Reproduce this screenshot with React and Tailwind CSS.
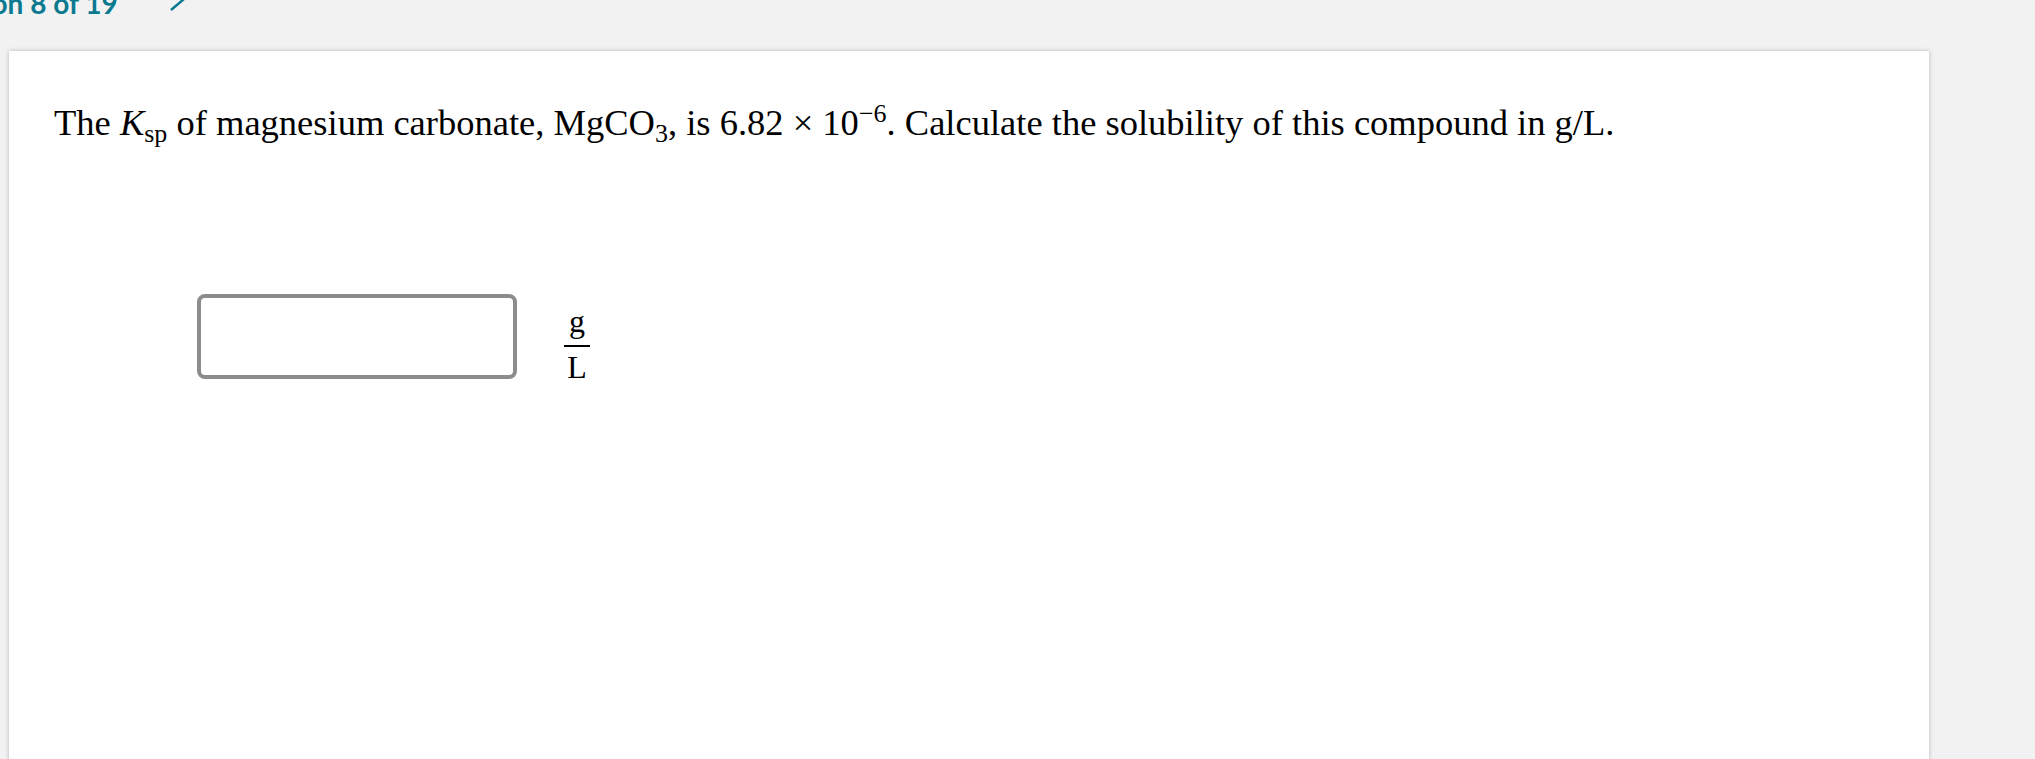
export default function App() {
  return (
    <div className="h-screen w-full overflow-hidden bg-[#f2f2f2]">
      {/* header strip, text is clipped at the top */}
      <div className="h-[51px] overflow-hidden">
        <div className="-mt-[11px] -ml-[92px] flex items-start font-['Lato',sans-serif] text-[28px] font-bold leading-none text-[#0b7a91]">
          <span>Question 8 of 19</span>
          <svg className="ml-[51px] -mt-[3px]" width="18" height="26" viewBox="0 0 18 26">
            <path d="M2 2 L15 13 L2 24" fill="none" stroke="#0b7a91" strokeWidth="2.5" />
          </svg>
        </div>
      </div>

      <div className="ml-[9px] h-full w-[1920px] bg-white shadow-[0_0_4px_rgba(0,0,0,0.25)]">
        <div className="pl-[45px] pt-[50px] font-['Liberation_Serif',serif] text-[36.5px] leading-[1.2] text-black">
          The <i>K</i>
          <sub className="text-[26px]">sp</sub> of magnesium carbonate, MgCO
          <sub className="text-[26px]">3</sub>, is 6.82 × 10
          <sup className="text-[26px]">−6</sup>. Calculate the solubility of this compound in g/L.
        </div>

        <div className="mt-[146px] flex items-center pl-[188px]">
          <div className="h-[85px] w-[320px] rounded-[8px] border-4 border-[#8c8c8c] bg-white"></div>
          <div className="ml-[47px] mt-[14px] flex flex-col items-center font-['Liberation_Serif',serif] text-[32px] leading-none text-black">
            <span className="pb-[8px]">g</span>
            <span className="h-[2px] w-[26px] bg-black"></span>
            <span className="pt-[4px]">L</span>
          </div>
        </div>
      </div>
    </div>
  );
}
